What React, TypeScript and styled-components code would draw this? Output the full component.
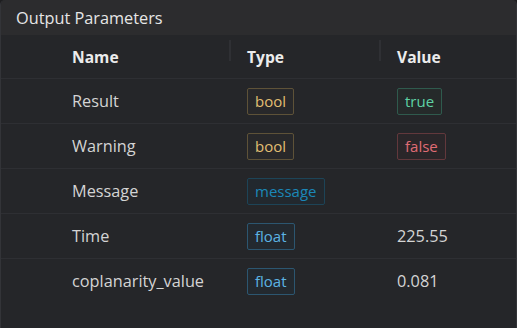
import styled, { createGlobalStyle } from "styled-components";

type Kind = "bool" | "true" | "false" | "message" | "float";

const badgeColors: Record<Kind, { fg: string; border: string; bg: string }> = {
  bool: { fg: "#e2bf72", border: "#5e5238", bg: "#28282a" },
  true: { fg: "#5ed2a4", border: "#2f5a4d", bg: "#252a2a" },
  false: { fg: "#e06c75", border: "#62383c", bg: "#2a2629" },
  message: { fg: "#1b87b8", border: "#1d4457", bg: "#22282e" },
  float: { fg: "#5cb4e4", border: "#2c5670", bg: "#23292f" },
};

const rows: { name: string; type: Kind; value?: Kind | string }[] = [
  { name: "Result", type: "bool", value: "true" },
  { name: "Warning", type: "bool", value: "false" },
  { name: "Message", type: "message" },
  { name: "Time", type: "float", value: "225.55" },
  { name: "coplanarity_value", type: "float", value: "0.081" },
];

export default function App() {
  return (
    <>
      <GlobalStyle />
      <Panel>
        <TitleBar>Output Parameters</TitleBar>
        <Table>
          <HeadRow>
            <HeadCell $sep>Name</HeadCell>
            <HeadCell $sep>Type</HeadCell>
            <HeadCell>Value</HeadCell>
          </HeadRow>
          {rows.map((r) => (
            <Row key={r.name}>
              <Cell>{r.name}</Cell>
              <Cell>
                <Badge $kind={r.type}>{r.type}</Badge>
              </Cell>
              <Cell>
                {r.value === "true" || r.value === "false" ? (
                  <Badge $kind={r.value}>{r.value}</Badge>
                ) : (
                  r.value
                )}
              </Cell>
            </Row>
          ))}
        </Table>
      </Panel>
    </>
  );
}

const GlobalStyle = createGlobalStyle`
  html, body {
    margin: 0;
    padding: 0;
    background: #1e1e20;
  }
  body {
    font-family: "Open Sans", "Noto Sans", sans-serif;
  }
`;

const Panel = styled.div`
  width: 517px;
  height: 328px;
  box-sizing: border-box;
  background: #252629;
  border-left: 1px solid #333438;
  border-right: 1px solid #333438;
  border-top-left-radius: 5px;
  border-top-right-radius: 5px;
  overflow: hidden;
  display: flex;
  flex-direction: column;
`;

const TitleBar = styled.div`
  height: 35px;
  flex-shrink: 0;
  background: #2c2c2e;
  color: #e6e6e6;
  font-size: 16.3px;
  display: flex;
  align-items: center;
  padding-left: 15px;
`;

const Table = styled.div`
  display: flex;
  flex-direction: column;
`;

const RowBase = styled.div`
  display: grid;
  grid-template-columns: 175px 150px 1fr;
  padding-left: 55px;
  border-bottom: 1px solid #2e2f33;
  align-items: center;
`;

const HeadRow = styled(RowBase)`
  height: 43px;
`;

const Row = styled(RowBase)`
  height: 44px;
  &:last-child {
    border-bottom: none;
  }
`;

const HeadCell = styled.div<{ $sep?: boolean }>`
  padding-left: 16px;
  color: #ececec;
  font-weight: 700;
  font-size: 15.6px;
  position: relative;
  ${(p) =>
    p.$sep &&
    `
    &::after {
      content: "";
      position: absolute;
      right: 0;
      top: -6px;
      width: 2px;
      height: 21px;
      background: #2f3034;
    }
  `}
`;

const Cell = styled.div`
  padding-left: 16px;
  color: #d4d4d4;
  font-size: 16.3px;
`;

const Badge = styled.span<{ $kind: Kind }>`
  display: inline-flex;
  align-items: center;
  height: 27px;
  box-sizing: border-box;
  padding: 0 7px;
  border-radius: 2px;
  font-size: 15px;
  color: ${(p) => badgeColors[p.$kind].fg};
  border: 1px solid ${(p) => badgeColors[p.$kind].border};
  background: ${(p) => badgeColors[p.$kind].bg};
`;
